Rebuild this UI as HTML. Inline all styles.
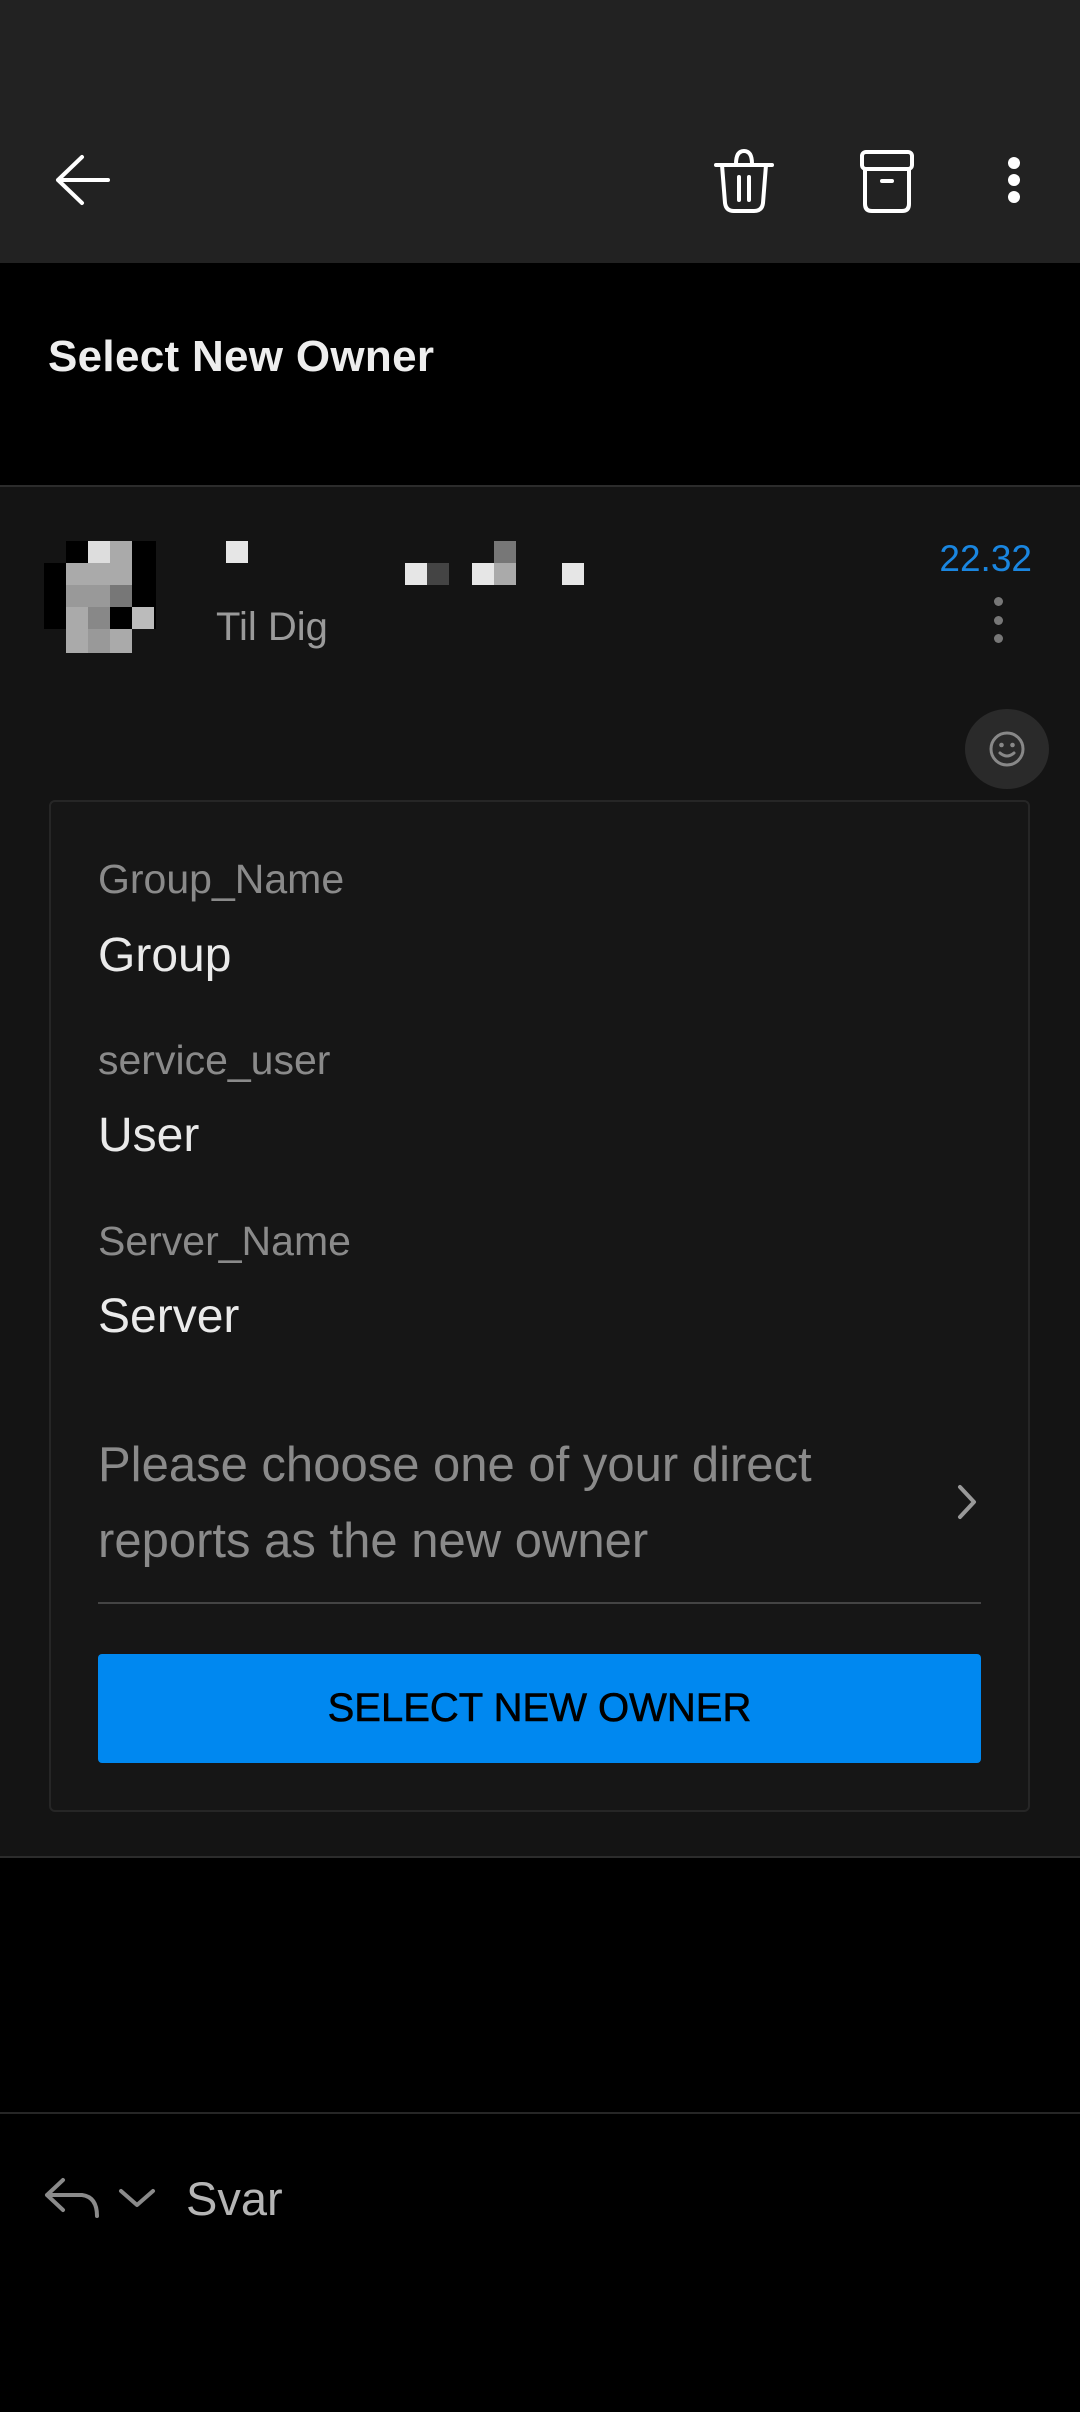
<!DOCTYPE html>
<html><head><meta charset="utf-8"><style>
*{margin:0;padding:0;box-sizing:border-box}
body{width:1080px;height:2412px;background:#000;font-family:"Liberation Sans",sans-serif;position:relative;overflow:hidden}
.abs{position:absolute}
.t{position:absolute;white-space:nowrap}
</style></head><body>
<div class="abs" style="left:0;top:0;width:1080px;height:263px;background:#222"></div>
<svg class="abs" style="left:0;top:140px" width="1080" height="80" viewBox="0 140 1080 80">
<g fill="none" stroke="#fff" stroke-width="4" stroke-linecap="round" stroke-linejoin="round">
<path d="M108 180H58M82 157L58 180L82 203"/>
<path d="M716 165H772"/>
<path d="M722 165L725 203Q726 211 734 211H754Q762 211 763 203L766 165"/>
<path d="M736 164Q736 151 744 151Q752 151 752 164"/>
<path d="M739 177V200M749 177V200"/>
<rect x="862" y="152" width="50" height="17" rx="4"/>
<path d="M865 169V204Q865 211 872 211H902Q909 211 909 204V169M882 181H892"/>
</g>
<circle cx="1014" cy="163" r="6" fill="#fff"/><circle cx="1014" cy="180" r="6" fill="#fff"/><circle cx="1014" cy="197" r="6" fill="#fff"/>
</svg>
<div class="t" style="left:48px;top:332px;font-size:44px;font-weight:bold;color:#eee;letter-spacing:0.3px">Select New Owner</div>
<div class="abs" style="left:0;top:485px;width:1080px;height:1373px;background:#141414;border-top:2px solid #2c2c2c;border-bottom:2px solid #2c2c2c"></div>
<svg class="abs" style="left:44px;top:541px" width="115" height="115">
<rect x="22" y="0" width="90" height="22" fill="#000"/><rect x="44" y="0" width="22" height="22" fill="#ddd"/><rect x="66" y="0" width="22" height="22" fill="#aaa"/>
<rect x="0" y="22" width="112" height="22" fill="#000"/><rect x="22" y="22" width="66" height="22" fill="#aaa"/>
<rect x="0" y="44" width="112" height="22" fill="#000"/><rect x="22" y="44" width="44" height="22" fill="#999"/><rect x="66" y="44" width="22" height="22" fill="#777"/>
<rect x="0" y="66" width="112" height="22" fill="#000"/><rect x="22" y="66" width="22" height="22" fill="#aaa"/><rect x="44" y="66" width="22" height="22" fill="#888"/><rect x="88" y="66" width="22" height="22" fill="#bbb"/>
<rect x="22" y="88" width="66" height="24" fill="#aaa"/><rect x="44" y="88" width="22" height="24" fill="#999"/>
</svg>
<div class="abs" style="left:226px;top:541px;width:22px;height:22px;background:#e6e6e6"></div>
<div class="abs" style="left:405px;top:563px;width:22px;height:22px;background:#e6e6e6"></div>
<div class="abs" style="left:427px;top:563px;width:22px;height:22px;background:#444"></div>
<div class="abs" style="left:472px;top:563px;width:22px;height:22px;background:#e6e6e6"></div>
<div class="abs" style="left:494px;top:563px;width:22px;height:22px;background:#aaa"></div>
<div class="abs" style="left:494px;top:541px;width:22px;height:22px;background:#777"></div>
<div class="abs" style="left:562px;top:563px;width:22px;height:22px;background:#e6e6e6"></div>
<div class="t" style="left:216px;top:605px;font-size:40px;color:#9a9a9a">Til Dig</div>
<div class="t" style="right:48px;top:538px;font-size:37px;color:#1a86e0">22.32</div>
<div class="abs" style="left:994px;top:597px;width:9px;height:9px;border-radius:50%;background:#777"></div>
<div class="abs" style="left:994px;top:616px;width:9px;height:9px;border-radius:50%;background:#777"></div>
<div class="abs" style="left:994px;top:634px;width:9px;height:9px;border-radius:50%;background:#777"></div>
<div class="abs" style="left:965px;top:709px;width:84px;height:80px;border-radius:50%;background:#2a2a2a"></div>
<svg class="abs" style="left:987px;top:729px" width="40" height="40"><g fill="none" stroke="#888" stroke-width="3"><circle cx="20" cy="20" r="16"/><path d="M13 24Q20 30 27 24" stroke-linecap="round"/></g><circle cx="14.5" cy="16" r="2.3" fill="#888"/><circle cx="25.5" cy="16" r="2.3" fill="#888"/></svg>
<div class="abs" style="left:49px;top:800px;width:981px;height:1012px;border:2px solid #262626;border-radius:6px;background:#161616"></div>
<div class="t" style="left:98px;top:856px;font-size:41px;color:#8a8a8a">Group_Name</div>
<div class="t" style="left:98px;top:928px;font-size:48px;color:#eaeaea">Group</div>
<div class="t" style="left:98px;top:1037px;font-size:41px;color:#8a8a8a">service_user</div>
<div class="t" style="left:98px;top:1108px;font-size:48px;color:#eaeaea">User</div>
<div class="t" style="left:98px;top:1218px;font-size:41px;color:#8a8a8a">Server_Name</div>
<div class="t" style="left:98px;top:1289px;font-size:48px;color:#eaeaea">Server</div>
<div class="t" style="left:98px;top:1427px;font-size:49px;line-height:76px;color:#8a8a8a">Please choose one of your direct<br>reports as the new owner</div>
<svg class="abs" style="left:952px;top:1482px" width="30" height="40"><path d="M8 5L22 20L8 35" fill="none" stroke="#999" stroke-width="4" stroke-linecap="round" stroke-linejoin="round"/></svg>
<div class="abs" style="left:98px;top:1602px;width:883px;height:2px;background:#444"></div>
<div class="abs" style="left:98px;top:1654px;width:883px;height:109px;background:#0088f0;border-radius:4px;color:#000;font-size:40px;text-align:center;line-height:109px;-webkit-text-stroke:0.6px #000">SELECT NEW OWNER</div>
<div class="abs" style="left:0;top:2112px;width:1080px;height:2px;background:#262626"></div>
<svg class="abs" style="left:40px;top:2170px" width="120" height="60"><g fill="none" stroke="#8a8a8a" stroke-width="4" stroke-linecap="round" stroke-linejoin="round"><path d="M23 10L7 25L23 40M7 25H42Q57 27 57 46"/><path d="M81 21L97 35L113 21"/></g></svg>
<div class="t" style="left:186px;top:2171px;font-size:47px;color:#b5b5b5">Svar</div>
</body></html>
